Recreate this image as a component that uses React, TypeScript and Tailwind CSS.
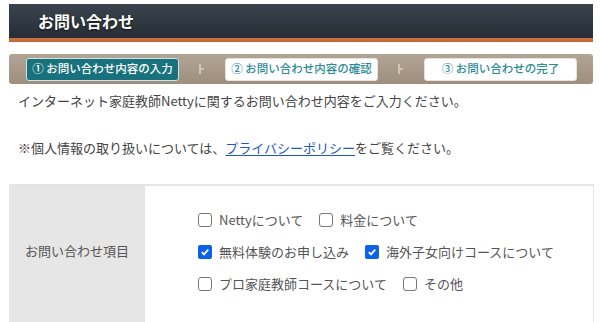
import { useState } from 'react'

const font = { fontFamily: '"Noto Sans CJK JP", "Noto Sans", sans-serif' }

function Sep() {
  return (
    <svg width="8" height="12" viewBox="0 0 8 12" className="shrink-0">
      <path d="M2 1v10M2 6h4" stroke="#d8d0c6" strokeWidth="1.6" fill="none" />
    </svg>
  )
}

function Step({ label, active }: { label: string; active?: boolean }) {
  return (
    <div
      className={
        'w-[153px] h-[23px] rounded-[3px] flex items-center justify-center text-[11.5px] font-medium ' +
        (active
          ? 'bg-[#18727d] text-white border border-[#cfe3e5]'
          : 'bg-white text-[#2d8b97] border border-[#e8e2da]')
      }
    >
      {label}
    </div>
  )
}

function Check({ label, checked }: { label: string; checked?: boolean }) {
  return (
    <label className="flex items-center gap-[7px] mr-[16px]">
      {checked ? (
        <span className="w-[14px] h-[14px] rounded-[2px] bg-[#0b63e6] flex items-center justify-center">
          <svg width="10" height="10" viewBox="0 0 10 10">
            <path d="M1.8 5.2l2.2 2.2 4.2-4.8" stroke="white" strokeWidth="1.8" fill="none" />
          </svg>
        </span>
      ) : (
        <span className="w-[14px] h-[14px] rounded-[3px] border border-[#767676] bg-white" />
      )}
      <span>{label}</span>
    </label>
  )
}

export default function App() {
  const [items] = useState([
    [{ label: 'Nettyについて' }, { label: '料金について' }],
    [{ label: '無料体験のお申し込み', checked: true }, { label: '海外子女向けコースについて', checked: true }],
    [{ label: 'プロ家庭教師コースについて' }, { label: 'その他' }],
  ])

  return (
    <div className="w-[600px] h-[322px] bg-white overflow-hidden pt-[4px]" style={font}>
      <div className="mx-[9px] w-[584px]">
        <div className="h-[34px] bg-gradient-to-b from-[#3b444e] to-[#262d34] flex items-center pl-[29px]">
          <span className="text-white text-[16px] font-bold [text-shadow:0_1px_2px_rgba(0,0,0,0.7)]">お問い合わせ</span>
        </div>
        <div className="h-[4px] bg-gradient-to-b from-[#d2723e] to-[#b7663f]" />

        <div className="mt-[12px] h-[30px] rounded-[3px] bg-gradient-to-b from-[#b3a595] to-[#9d8e7e] flex items-center pl-[17px] gap-[19px]">
          <Step label="① お問い合わせ内容の入力" active />
          <Sep />
          <Step label="② お問い合わせ内容の確認" />
          <Sep />
          <Step label="③ お問い合わせの完了" />
        </div>
      </div>

      <div className="pl-[18px] mt-[7px] text-[13px] text-[#444] leading-[20px]">
        <p>インターネット家庭教師Nettyに関するお問い合わせ内容をご入力ください。</p>
        <p className="mt-[27px]">
          ※個人情報の取り扱いについては、
          <a className="text-[#1a57c8] underline underline-offset-2">プライバシーポリシー</a>
          をご覧ください。
        </p>
      </div>

      <div className="mx-[9px] w-[585px] mt-[26px] border-t-[2px] border-[#e4e4e4] border-r border-r-[#e4e4e4] flex h-[200px]">
        <div className="w-[136px] bg-[#e6e6e6] pt-[55px] pl-[16px] text-[13px] leading-[20px] text-[#555]">お問い合わせ項目</div>
        <div className="pl-[53px] pt-[24px] text-[13px] text-[#555] flex flex-col gap-[12px]">
          {items.map((row, i) => (
            <div key={i} className="flex h-[20px]">
              {row.map((it) => (
                <Check key={it.label} label={it.label} checked={it.checked} />
              ))}
            </div>
          ))}
        </div>
      </div>
    </div>
  )
}
